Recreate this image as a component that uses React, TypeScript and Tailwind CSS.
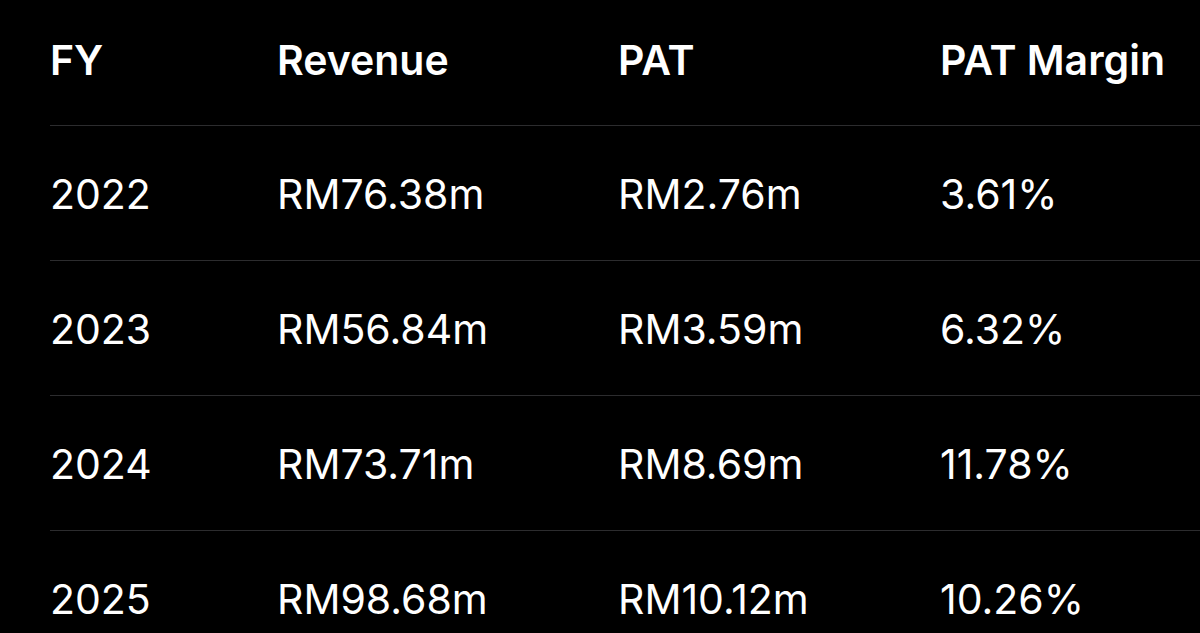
const rows = [
  ["2022", "RM76.38m", "RM2.76m", "3.61%"],
  ["2023", "RM56.84m", "RM3.59m", "6.32%"],
  ["2024", "RM73.71m", "RM8.69m", "11.78%"],
  ["2025", "RM98.68m", "RM10.12m", "10.26%"],
]

export default function App() {
  return (
    <div
      className="h-[633px] w-[1200px] overflow-hidden bg-black pl-[50px] text-white"
      style={{ fontFamily: "Inter, 'Noto Sans', sans-serif" }}
    >
      <div className="-mt-[7px] flex h-[133px] items-center border-b border-[#2c2c2e] pt-[4px] text-[41px] font-semibold">
        <div className="w-[227px]">FY</div>
        <div className="w-[341px]">Revenue</div>
        <div className="w-[322px]">PAT</div>
        <div>PAT Margin</div>
      </div>
      {rows.map((r) => (
        <div
          key={r[0]}
          className="flex h-[135px] items-center border-b border-[#2c2c2e] pt-[3px] text-[41px] font-normal"
        >
          <div className="w-[227px]">{r[0]}</div>
          <div className="w-[341px]">{r[1]}</div>
          <div className="w-[322px]">{r[2]}</div>
          <div>{r[3]}</div>
        </div>
      ))}
    </div>
  )
}
